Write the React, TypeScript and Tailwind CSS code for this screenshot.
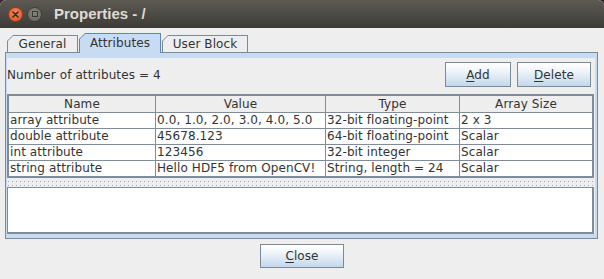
import React from "react";

const F = "font-['DejaVu_Sans',sans-serif] tracking-[0.1px]";

function Btn({ w, first, rest, h }: { w: string; first: string; rest: string; h: string }) {
  return (
    <div
      className={`${w} ${h} border border-[#7a8a99] bg-[linear-gradient(to_bottom,#ffffff_0%,#f7fafd_20%,#e2ecf6_55%,#c3d7ec_100%)] flex items-center justify-center text-[12px] text-[#333333] ${F}`}
    >
      <span>
        <span className="underline underline-offset-2">{first}</span>
        {rest}
      </span>
    </div>
  );
}

function Tab({
  label,
  w,
  selected,
}: {
  label: string;
  w: string;
  selected?: boolean;
}) {
  return (
    <div
      className={`${w} ${
        selected ? "h-[20px] bg-[#6382bf] relative z-10 -mb-[1px]" : "h-[17px] bg-[#7a8a99]"
      } p-[1px] pb-0 [clip-path:polygon(6px_0,100%_0,100%_100%,0_100%,0_6px)]`}
    >
      <div
        className={`h-full ${
          selected ? "bg-[#c8dcf1]" : "bg-[#eeeeee]"
        } [clip-path:polygon(5px_0,100%_0,100%_100%,0_100%,0_5px)] flex items-center justify-center text-[12px] text-[#333333] ${F} ${
          selected ? "pb-[2px]" : ""
        }`}
      >
        {label}
      </div>
    </div>
  );
}

export default function App() {
  const header = ["Name", "Value", "Type", "Array Size"];
  const rows = [
    ["array attribute", "0.0, 1.0, 2.0, 3.0, 4.0, 5.0", "32-bit floating-point", "2 x 3"],
    ["double attribute", "45678.123", "64-bit floating-point", "Scalar"],
    ["int attribute", "123456", "32-bit integer", "Scalar"],
    ["string attribute", "Hello HDF5 from OpenCV!", "String, length = 24", "Scalar"],
  ];
  const widths = ["w-[147px]", "w-[170px]", "w-[134px]", "w-[132px]"];

  return (
    <div className="w-[604px] h-[279px] bg-[#3a2434] overflow-hidden">
      <div className="w-[604px] h-[279px] flex flex-col bg-[#eeeeee] rounded-t-[6px] overflow-hidden">
        {/* Title bar */}
        <div className="h-[28px] shrink-0 bg-[linear-gradient(to_bottom,#5d5a53,#3c3b37)] flex items-center pl-[8px]">
          <div className="w-[15px] h-[15px] rounded-full border border-[#9b3b18] bg-[radial-gradient(circle_at_50%_35%,#f7875f,#e0501f)] flex items-center justify-center">
            <svg width="7" height="7" viewBox="0 0 7 7">
              <path d="M1 1L6 6M6 1L1 6" stroke="#3a2a22" strokeWidth="1.6" strokeLinecap="round" />
            </svg>
          </div>
          <div className="ml-[4px] w-[15px] h-[15px] rounded-full border border-[#3f3d39] bg-[radial-gradient(circle_at_50%_35%,#86847d,#65635d)] flex items-center justify-center">
            <div className="w-[6px] h-[6px] border border-[#3a3935]" />
          </div>
          <div className="ml-[12px] text-[15px] font-bold text-[#dfdbd2] font-['Liberation_Sans',sans-serif] leading-none pb-[1px]">
            Properties - /
          </div>
        </div>

        {/* Tabs */}
        <div className="h-[24px] shrink-0 flex items-end pl-[7px] gap-[1px]">
          <Tab label="General" w="w-[71px]" />
          <Tab label="Attributes" w="w-[82px]" selected />
          <Tab label="User Block" w="w-[86px]" />
        </div>

        {/* Panel */}
        <div className="ml-[5px] w-[593px] h-[187px] shrink-0 border border-[#7a8a99] bg-[#c8dcf1] pt-[5px] pl-[1px] pr-[2px] pb-[4px]">
          <div className="w-[588px] h-[176px] bg-[#eeeeee] flex flex-col">
            {/* Top row */}
            <div className="h-[29px] pt-[4px] pr-[4px] flex items-center shrink-0">
              <div className={`flex-1 text-[12px] text-[#333333] ${F} pt-[1px]`}>
                Number of attributes = 4
              </div>
              <div className="flex gap-[6px] h-[25px]">
                <Btn w="w-[66px]" h="h-[25px]" first="A" rest="dd" />
                <Btn w="w-[74px]" h="h-[25px]" first="D" rest="elete" />
              </div>
            </div>

            {/* Table */}
            <div className={`mt-[7px] w-[587px] h-[84px] border-2 border-[#7f8c99] bg-white flex flex-col shrink-0 text-[12px] text-[#333333] ${F}`}>
              <div className="h-[17px] flex bg-[#eeeeee] border-b border-[#7f8c99]">
                {header.map((h, i) => (
                  <div
                    key={h}
                    className={`${widths[i]} h-full leading-[16px] text-center ${
                      i < 3 ? "border-r border-[#7f8c99]" : ""
                    }`}
                  >
                    {h}
                  </div>
                ))}
              </div>
              {rows.map((r, ri) => (
                <div
                  key={ri}
                  className={`flex ${ri < 3 ? "h-[16px] border-b border-[#7f8c99]" : "h-[15px]"}`}
                >
                  {r.map((c, i) => (
                    <div
                      key={i}
                      className={`${widths[i]} h-[15px] leading-[15px] pl-[1px] whitespace-nowrap overflow-hidden ${
                        i < 3 ? "border-r border-[#7f8c99]" : ""
                      }`}
                    >
                      {c}
                    </div>
                  ))}
                </div>
              ))}
            </div>

            {/* Split divider */}
            <div className="h-[9px] w-[587px] shrink-0">
              <svg width="587" height="9" className="block">
                <defs>
                  <pattern id="bumps" width="4" height="4" patternUnits="userSpaceOnUse" x="1" y="3">
                    <rect x="0" y="0" width="1" height="1" fill="#9ea7b0" />
                    <rect x="1" y="1" width="1" height="1" fill="#ffffff" />
                  </pattern>
                </defs>
                <rect x="1" y="3" width="585" height="5" fill="url(#bumps)" />
              </svg>
            </div>

            {/* Lower text area */}
            <div className="w-[587px] h-[47px] shrink-0 bg-white border-t border-l border-[#7f8c99] border-r-2 border-b-2" />
          </div>
        </div>

        {/* Close */}
        <div className="flex justify-center mt-[5px]">
          <Btn w="w-[84px]" h="h-[24px]" first="C" rest="lose" />
        </div>
      </div>
    </div>
  );
}
